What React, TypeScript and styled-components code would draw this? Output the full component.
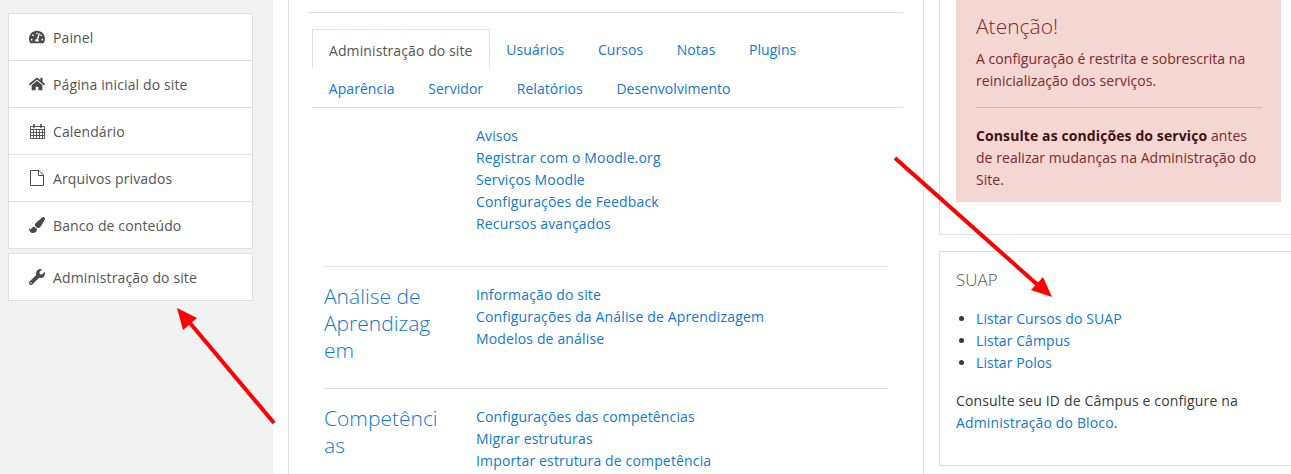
import React from "react";
import styled, { createGlobalStyle } from "styled-components";
import { FaHome, FaPaintBrush, FaTachometerAlt, FaWrench } from "react-icons/fa";

const GlobalStyle = createGlobalStyle`
  html, body {
    margin: 0;
    padding: 0;
    height: 474px;
    overflow: hidden;
    background: #fff;
  }
  body {
    font-family: "Open Sans", "Liberation Sans", sans-serif;
    font-size: 14px;
    letter-spacing: 0.15px;
    color: #373a3c;
  }
  a {
    color: #1177d1;
    text-decoration: none;
  }
`;

const Page = styled.div`
  position: relative;
  display: flex;
  width: 1291px;
  height: 474px;
  overflow: hidden;
`;

const Sidebar = styled.aside`
  width: 273px;
  flex: none;
  box-sizing: border-box;
  background: #f2f2f2;
  padding: 13px 20px 0 8px;
`;

const NavBlock = styled.nav`
  background: #fff;
  border: 1px solid #dfdfdf;
  margin-bottom: 4px;
`;

const NavItem = styled.div`
  height: 46px;
  display: flex;
  align-items: center;
  padding-left: 20px;
  color: #555;
  letter-spacing: 0.12px;
  & + & {
    border-top: 1px solid #dfdfdf;
  }
`;

const NavIcon = styled.span`
  width: 16px;
  margin-right: 8px;
  display: flex;
  justify-content: center;
  color: #4a4a4a;
  font-size: 16px;
`;

const Main = styled.main`
  width: 636px;
  flex: none;
  margin-left: 15px;
  box-sizing: border-box;
  border: 1px solid #dfdfdf;
  border-width: 0 1px;
  padding: 12px 20px 0 20px;
`;

const TopRule = styled.div`
  border-top: 1px solid #dfdfdf;
  margin-bottom: 16px;
`;

const Tabs = styled.div`
  margin-left: 3px;
  border-bottom: 1px solid #dfdfdf;
`;

const TabRow = styled.div`
  display: flex;
  height: 39px;
`;

const Tab = styled.a<{ $active?: boolean }>`
  box-sizing: border-box;
  display: flex;
  align-items: center;
  padding: 2px 16.8px 0;
  letter-spacing: 0.05px;
  color: ${(p) => (p.$active ? "#555" : "#1177d1")};
  ${(p) =>
    p.$active &&
    `
    border: 1px solid #dfdfdf;
    border-bottom: 0;
    padding-left: 16px;
    padding-right: 16px;
    letter-spacing: 0.1px;
  `}
`;

const Section = styled.section<{ $height: number; $rule?: boolean }>`
  display: flex;
  margin: 0 15px;
  height: ${(p) => p.$height}px;
  box-sizing: border-box;
  ${(p) => p.$rule && "border-top: 1px solid #dfdfdf;"}
`;

const SectionTitle = styled.h4`
  width: 152px;
  flex: none;
  box-sizing: border-box;
  margin: 0;
  padding: 16px 36px 0 0;
  font-size: 21px;
  line-height: 27.2px;
  font-weight: 300;
  letter-spacing: 0;
  color: #1177d1;
  overflow-wrap: anywhere;
`;

const LinkList = styled.div`
  display: flex;
  flex-direction: column;
  padding-top: 17px;
`;

const ListLink = styled.a`
  line-height: 22px;
  white-space: nowrap;
`;

const Aside = styled.div`
  flex: 1;
  margin-left: 15px;
  min-width: 0;
`;

const Card = styled.div`
  border: 1px solid #dfdfdf;
  border-right: 0;
  box-sizing: border-box;
`;

const WarningCard = styled(Card)`
  border-top: 0;
  height: 235px;
  padding-left: 16px;
  margin-bottom: 16px;
`;

const Alert = styled.div`
  width: 325px;
  height: 202px;
  box-sizing: border-box;
  background: #f4d6d2;
  padding: 12px 19px 0 20px;
  color: #7d2a2a;
  line-height: 22px;
  letter-spacing: 0.05px;
`;

const AlertTitle = styled.h4`
  margin: 0 0 8px;
  font-size: 21px;
  line-height: 28px;
  font-weight: 300;
  letter-spacing: 0;
`;

const AlertText = styled.p`
  margin: 0;
`;

const AlertRule = styled.hr`
  border: 0;
  border-top: 1px solid #e6afa9;
  margin: 15px 0 17px;
`;

const Strong = styled.strong`
  color: #3f1111;
  font-weight: 700;
  letter-spacing: 0.1px;
`;

const SuapCard = styled(Card)`
  height: 215px;
  padding: 16px 16px 0;
`;

const CardTitle = styled.h5`
  margin: 0 0 16px;
  font-size: 17px;
  line-height: 24px;
  font-weight: 300;
  letter-spacing: 0;
  color: #555;
`;

const BulletList = styled.ul`
  margin: 0 0 16px;
  padding-left: 20px;
  line-height: 22px;
  letter-spacing: 0.08px;
`;

const Note = styled.p`
  margin: 0;
  line-height: 22px;
`;

const ArrowLayer = styled.svg`
  position: absolute;
  inset: 0;
  pointer-events: none;
`;

const CalendarIcon = () => (
  <svg width="15" height="15" viewBox="0 0 15 15" fill="none" stroke="currentColor">
    <path d="M.5 2.5h14v12H.5zM.5 5.5h14M.5 8.5h14M.5 11.5h14M3.5 5.5v9M6.5 5.5v9M9.5 5.5v9M12.5 5.5v9" strokeWidth="0.9" />
    <path d="M4 .5v3M11 .5v3" strokeWidth="1.6" strokeLinecap="round" />
  </svg>
);

const FileIcon = () => (
  <svg width="14" height="16" viewBox="0 0 14 16" fill="none" stroke="currentColor">
    <path d="M.5.5h8.5l4.5 4.5v10.5H.5zM8.5.5v5h5" strokeWidth="1" />
  </svg>
);

const navItems = [
  { label: "Painel", icon: <FaTachometerAlt /> },
  { label: "Página inicial do site", icon: <FaHome /> },
  { label: "Calendário", icon: <CalendarIcon /> },
  { label: "Arquivos privados", icon: <FileIcon /> },
  { label: "Banco de conteúdo", icon: <FaPaintBrush /> },
];

export default function App() {
  return (
    <Page>
      <GlobalStyle />
      <Sidebar>
        <NavBlock>
          {navItems.map((item) => (
            <NavItem key={item.label}>
              <NavIcon>{item.icon}</NavIcon>
              {item.label}
            </NavItem>
          ))}
        </NavBlock>
        <NavBlock>
          <NavItem>
            <NavIcon>
              <FaWrench />
            </NavIcon>
            Administração do site
          </NavItem>
        </NavBlock>
      </Sidebar>

      <Main>
        <TopRule />
        <Tabs>
          <TabRow>
            <Tab $active>Administração do site</Tab>
            <Tab>Usuários</Tab>
            <Tab>Cursos</Tab>
            <Tab>Notas</Tab>
            <Tab>Plugins</Tab>
          </TabRow>
          <TabRow>
            <Tab>Aparência</Tab>
            <Tab>Servidor</Tab>
            <Tab>Relatórios</Tab>
            <Tab>Desenvolvimento</Tab>
          </TabRow>
        </Tabs>
        <Section $height={158}>
          <SectionTitle />
          <LinkList>
            <ListLink>Avisos</ListLink>
            <ListLink>Registrar com o Moodle.org</ListLink>
            <ListLink>Serviços Moodle</ListLink>
            <ListLink>Configurações de Feedback</ListLink>
            <ListLink>Recursos avançados</ListLink>
          </LinkList>
        </Section>
        <Section $height={122} $rule>
          <SectionTitle>Análise de Aprendizagem</SectionTitle>
          <LinkList>
            <ListLink>Informação do site</ListLink>
            <ListLink>Configurações da Análise de Aprendizagem</ListLink>
            <ListLink>Modelos de análise</ListLink>
          </LinkList>
        </Section>
        <Section $height={100} $rule>
          <SectionTitle>Competências</SectionTitle>
          <LinkList>
            <ListLink>Configurações das competências</ListLink>
            <ListLink>Migrar estruturas</ListLink>
            <ListLink>Importar estrutura de competência</ListLink>
          </LinkList>
        </Section>
      </Main>

      <Aside>
        <WarningCard>
          <Alert>
            <AlertTitle>Atenção!</AlertTitle>
            <AlertText>A configuração é restrita e sobrescrita na reinicialização dos serviços.</AlertText>
            <AlertRule />
            <AlertText>
              <Strong>Consulte as condições do serviço</Strong> antes de realizar mudanças na
              Administração do Site.
            </AlertText>
          </Alert>
        </WarningCard>
        <SuapCard>
          <CardTitle>SUAP</CardTitle>
          <BulletList>
            <li>
              <a>Listar Cursos do SUAP</a>
            </li>
            <li>
              <a>Listar Câmpus</a>
            </li>
            <li>
              <a>Listar Polos</a>
            </li>
          </BulletList>
          <Note>
            Consulte seu ID de Câmpus e configure na <a>Administração do Bloco</a>.
          </Note>
        </SuapCard>
      </Aside>

      <ArrowLayer width="1291" height="474" viewBox="0 0 1291 474">
        <path d="M274 423 L190 323" stroke="#f00" strokeWidth="4" fill="none" />
        <path d="M177 308 L197 318 L183 330 Z" fill="#f00" />
        <path d="M895 158 L1040 287" stroke="#f00" strokeWidth="4" fill="none" />
        <path d="M1052 297 L1031 290 L1043 277 Z" fill="#f00" />
      </ArrowLayer>
    </Page>
  );
}
